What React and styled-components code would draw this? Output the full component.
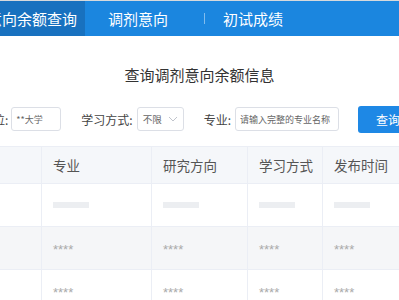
import React from 'react';
import styled, { createGlobalStyle } from 'styled-components';

const GlobalStyle = createGlobalStyle`
  html, body {
    margin: 0;
    padding: 0;
    background: #fff;
    overflow: hidden;
  }
  body {
    font-family: "Noto Sans CJK SC", "Liberation Sans", sans-serif;
    color: #333;
  }
`;

const columns = [
  { key: 'unit', title: '招生单位', width: 110 },
  { key: 'major', title: '专业', width: 110 },
  { key: 'dir', title: '研究方向', width: 96 },
  { key: 'mode', title: '学习方式', width: 75 },
  { key: 'date', title: '发布时间', width: 110 },
];

const rows = [
  { loading: true },
  { loading: false, striped: true },
  { loading: false },
];

const App = () => {
  return (
    <Page>
      <GlobalStyle />
      <NavBar>
        <NavList>
          <Tab $active>调剂意向余额查询</Tab>
          <Tab>调剂意向</Tab>
          <Divider />
          <Tab>初试成绩</Tab>
        </NavList>
      </NavBar>

      <Title>查询调剂意向余额信息</Title>

      <FormRow>
        <Label>单位:</Label>
        <TextInput $width={50} placeholder="**大学" />
        <Label $spaced>学习方式:</Label>
        <Select>
          <span>不限</span>
          <svg width="10" height="6" viewBox="0 0 10 6">
            <path d="M1 1l4 4 4-4" fill="none" stroke="#c0c4cc" strokeWidth="1" />
          </svg>
        </Select>
        <Label $spaced>专业:</Label>
        <TextInput $width={104} placeholder="请输入完整的专业名称" />
        <SearchButton>查询</SearchButton>
      </FormRow>

      <Table>
        <HeadRow>
          {columns.map((c) => (
            <HeadCell key={c.key} $width={c.width}>{c.title}</HeadCell>
          ))}
        </HeadRow>
        {rows.map((r, i) => (
          <Row key={i} $striped={r.striped}>
            {columns.map((c, j) => (
              <Cell key={c.key} $width={c.width}>
                {j === 0 ? null : r.loading ? <Skeleton /> : <Stars>****</Stars>}
              </Cell>
            ))}
          </Row>
        ))}
      </Table>
    </Page>
  );
};

const Page = styled.div`
  width: 399px;
  height: 300px;
  overflow: hidden;
`;

const NavBar = styled.div`
  height: 35px;
  border-top: 1px solid #d6d9dc;
  background: #1b86df;
  display: flex;
`;

const NavList = styled.div`
  display: flex;
  align-items: stretch;
  gap: 15px;
  margin-left: -51px;
`;

const Tab = styled.div`
  display: flex;
  align-items: center;
  padding: 0 8px;
  font-size: 15px;
  color: #fff;
  white-space: nowrap;
  background: ${(p) => (p.$active ? '#1871bf' : 'transparent')};
`;

const Divider = styled.div`
  align-self: center;
  width: 1px;
  height: 11px;
  margin: 0 -5px 0 13px;
  background: rgba(255, 255, 255, 0.45);
`;

const Title = styled.h2`
  margin: 29px 0 0;
  text-align: center;
  font-size: 15px;
  font-weight: normal;
  line-height: 20px;
  color: #333;
`;

const FormRow = styled.div`
  display: flex;
  justify-content: center;
  align-items: center;
  height: 28px;
  margin-top: 20px;
  white-space: nowrap;
`;

const Label = styled.span`
  flex: none;
  font-size: 12px;
  color: #444;
  margin: ${(p) => (p.$spaced ? '0 4px 0 20px' : '0 3px 0 0')};
`;

const TextInput = styled.input`
  flex: none;
  box-sizing: border-box;
  width: ${(p) => p.$width}px;
  height: 24px;
  padding: 0 4px;
  border: 1px solid #dcdfe6;
  border-radius: 3px;
  font-family: inherit;
  font-size: 9px;
  outline: none;
  &::placeholder {
    color: #666;
  }
`;

const Select = styled.div`
  flex: none;
  box-sizing: border-box;
  width: 47px;
  height: 24px;
  padding: 0 5px;
  border: 1px solid #dcdfe6;
  border-radius: 3px;
  display: flex;
  align-items: center;
  justify-content: space-between;
  font-size: 9.5px;
  color: #666;
`;

const SearchButton = styled.button`
  flex: none;
  width: 60px;
  height: 27px;
  margin-left: 19px;
  border: none;
  border-radius: 3px;
  background: #1e88e5;
  color: #fff;
  font-family: inherit;
  font-size: 12px;
`;

const Table = styled.div`
  margin-top: 13px;
  margin-left: -68px;
  width: 501px;
  border-top: 1px solid #ebeef5;
`;

const HeadRow = styled.div`
  display: flex;
  height: 36px;
  background: #f5f7fa;
  border-bottom: 1px solid #ebeef5;
`;

const HeadCell = styled.div`
  flex: none;
  box-sizing: border-box;
  width: ${(p) => p.$width}px;
  padding-left: 11px;
  display: flex;
  align-items: center;
  font-size: 13.5px;
  color: #555;
  border-right: 1px solid #ebeef5;
`;

const Row = styled.div`
  display: flex;
  height: 42px;
  background: ${(p) => (p.$striped ? '#f5f6f8' : '#fff')};
  border-bottom: 1px solid #ebeef5;
`;

const Cell = styled.div`
  flex: none;
  box-sizing: border-box;
  width: ${(p) => p.$width}px;
  padding-left: 11px;
  display: flex;
  align-items: center;
  border-right: 1px solid #ebeef5;
`;

const Skeleton = styled.div`
  width: 36px;
  height: 6px;
  background: #eceef1;
`;

const Stars = styled.span`
  font-family: "Liberation Sans", sans-serif;
  font-size: 13px;
  color: #aaa;
  line-height: 1;
  padding-top: 3px;
`;

export default App;
